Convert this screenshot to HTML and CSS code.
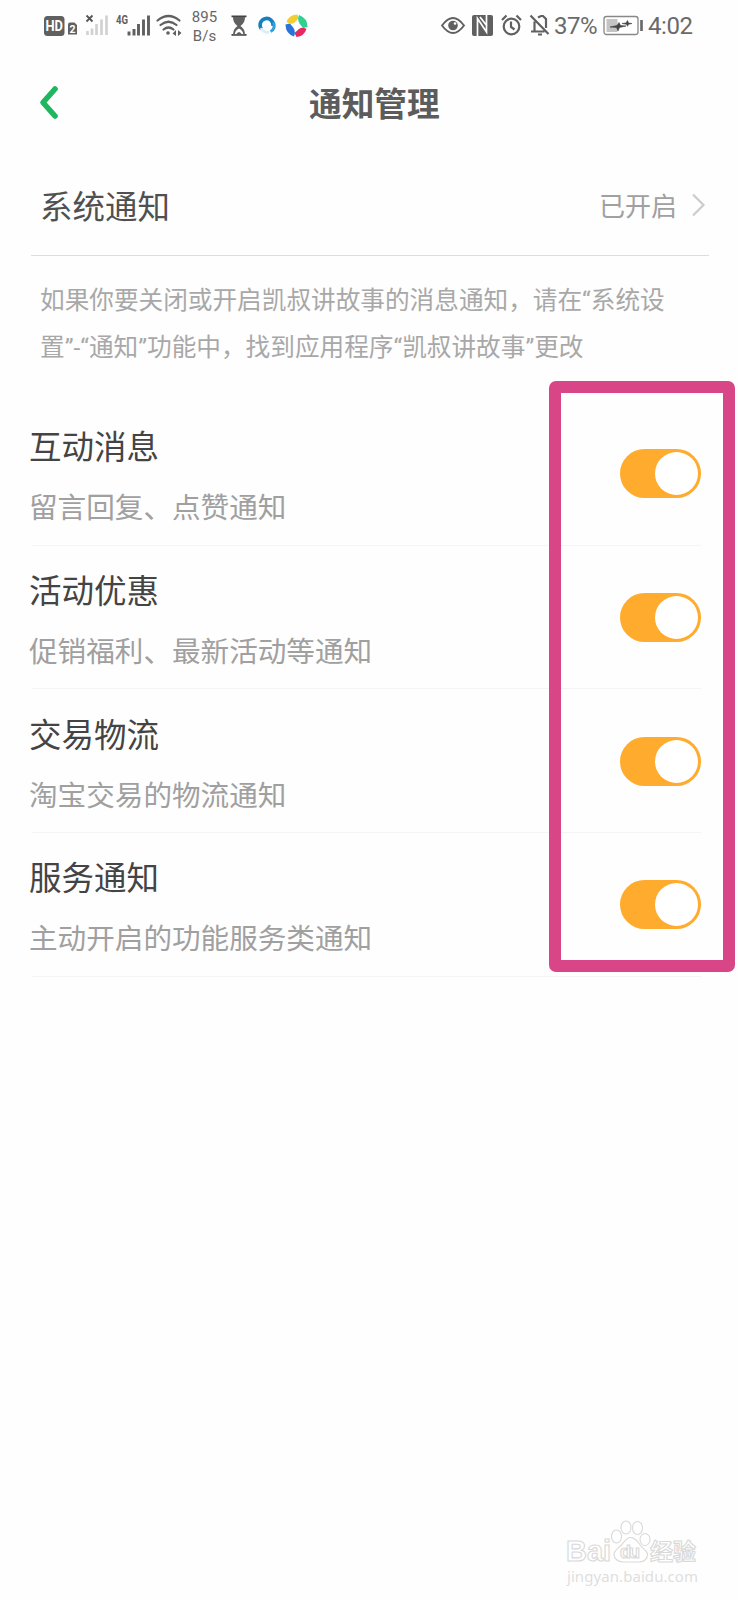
FILE: index.html
```html
<!DOCTYPE html>
<html lang="zh-CN">
<head>
<meta charset="utf-8">
<title>通知管理</title>
<link rel="stylesheet" href="styles.css">
</head>
<body>
<main class="screen">
  <div class="status">
    <svg class="status-left" width="160" height="50" viewBox="0 0 160 50">
      <rect x="14" y="16" width="20.500" height="20" rx="3.500" fill="#606060"/>
      <text x="15.500" y="31" class="hd" textLength="17.500" lengthAdjust="spacingAndGlyphs">HD</text>
      <path d="M38 24.500q0-2 2-2h4.500l2.500 2.500v9.500h-9z" fill="#606060"/>
      <text x="39.500" y="33" class="sim">2</text>
      <path d="M56.500 15.500l6 6m0-6l-6 6" stroke="#555" stroke-width="1.800"/>
      <path d="M57.500 35v-4M62 35v-6.500M66.500 35V24M71.500 35V19.500M76.500 35V15.500" stroke="#d0d0d0" stroke-width="2.600"/>
      <text x="86" y="24" class="gen" textLength="12" lengthAdjust="spacingAndGlyphs">4G</text>
      <path d="M99 35.500v-4M104 35.500v-6.500M108.500 35.500V24M113.500 35.500V19.500M118.500 35.500V15.500" stroke="#606060" stroke-width="2.900"/>
      <g fill="none" stroke="#606060" stroke-width="2.200" stroke-linecap="round">
        <path d="M127.500 20.500q11-9 22 0M130.500 25q8-6.500 16 0M133.500 29.500q5-4 10 0"/>
      </g>
      <circle cx="138" cy="33" r="1.800" fill="#606060"/>
      <path d="M142.500 33.500l3.500-3.500v6zM148 30v6l3.500-3z" fill="#606060"/>
    </svg>
    <div class="speed"><span>895</span><span>B/s</span></div>
    <svg class="status-apps" width="86" height="50" viewBox="0 0 86 50">
      <path d="M1.500 15.500h15v1.800h-15zM1.500 34h15v1.800h-15z" fill="#444"/>
      <path d="M3 17h12q0 6-4.500 9 4.500 3 4.500 9H3q0-6 4.500-9Q3 23 3 17z" fill="#606060"/>
      <path d="M4.800 34q.5-4 4.200-5.500 3.700 1.500 4.200 5.500z" fill="#fff"/>
      <path d="M6 34.500q3-5 6 0z" fill="#606060"/>
      <path d="M31.500 29a6.500 6.500 0 1 1 11.500-3" fill="none" stroke="#177fc0" stroke-width="3.600"/>
      <path d="M43.500 22q2.500 7-3 9.500" fill="none" stroke="#2fa0dc" stroke-width="3"/>
      <path d="M31 28q2 4.500 8 4.500" fill="none" stroke="#d6eefa" stroke-width="2.500"/>
      <path d="M56.500 22q2.500-7.500 11-7.500l1 4-4.500 4.500q-3 2-7.500-1z" fill="#f4cc2f"/>
      <path d="M69 15q8.500 3 8.500 12l-4.500 1-3.500-4.500q-2.500-4-.5-8.500z" fill="#2fd090"/>
      <path d="M76.500 29q-2.500 7.500-10 8l-2-4 4.500-4q3-2.500 7.500 0z" fill="#e32b60"/>
      <path d="M64 36.500q-8.500-3-8.500-12l4.500-1 3.500 4.500q2.500 4 .5 8.500z" fill="#2a72dc"/>
    </svg>
    <svg class="status-right" width="116" height="50" viewBox="0 0 116 50">
      <g fill="none" stroke="#606060" stroke-width="1.900">
        <path d="M2 25.500q11-15 22 0-11 15-22 0z"/>
        <circle cx="71.500" cy="26.500" r="7.800" stroke-width="2.200"/>
        <path d="M71 21.500v5.500l3.500 2.500M62 20l4.500-4.500M76.500 15.500l4.500 4.500" stroke-width="2.200"/>
        <path d="M91 31.500h13.500M94.500 31V21.500M98 17.500l3-1.500h2l3 3v9M98 34.500h4M90.500 15.500l18 18.500" stroke-width="2.200"/>
      </g>
      <circle cx="13" cy="25.500" r="4.800" fill="#606060"/>
      <circle cx="15" cy="23.500" r="1.300" fill="#fff"/>
      <path d="M34 15h17q2 0 2 2v17q0 2-2 2H34q-2 0-2-2V17q0-2 2-2z" fill="#606060"/>
      <path d="M37.500 36V18.500l9 13.500V15M40 17l7 9" fill="none" stroke="#fff" stroke-width="1.700"/>
    </svg>
    <span class="percent">37%</span>
    <svg class="battery" width="42" height="50" viewBox="0 0 42 50">
      <rect x="1" y="16.500" width="34" height="18" rx="2.500" fill="#fff" stroke="#888" stroke-width="1.300"/>
      <path d="M3.500 19h11v13h-11z" fill="#c4c4c4"/>
      <path d="M7 27l7-1.500 2-3 1.500 3 5.500.5-6.500 1.500-1.500 3.500-1.500-3.500zM19 23.500l4-.5 1.500-2.500 1 2.500 3.500.5-3.500.8-1 2-1-2z" fill="#444" stroke="#444" stroke-width=".6"/>
      <path d="M38.500 20v11" stroke="#666" stroke-width="2.600"/>
    </svg>
    <span class="clock">4:02</span>
  </div>

  <header class="header">
    <svg class="back" width="24" height="36" viewBox="0 0 24 36"><path d="M18 5L6 18.500 18 32" fill="none" stroke="#1fb65f" stroke-width="5.600" stroke-linecap="round" stroke-linejoin="round"/></svg>
    <h1 class="title">通知管理</h1>
  </header>

  <section class="system">
    <span class="system-label">系统通知</span>
    <span class="system-value">已开启</span>
    <svg class="chevron" width="16" height="26" viewBox="0 0 16 26"><path d="M2 2.500L12.500 13 2 23.500" fill="none" stroke="#ccc" stroke-width="2.200"/></svg>
  </section>
  <p class="hint">如果你要关闭或开启凯叔讲故事的消息通知，请在<q>“</q>系统设<br>置<q>”-“</q>通知<q>”</q>功能中，找到应用程序<q>“</q>凯叔讲故事<q>”</q>更改</p>

  <section class="list">
    <div class="item"><div class="copy"><div class="label">互动消息</div><div class="desc">留言回复、点赞通知</div></div><div class="toggle"><div class="knob"></div></div></div>
    <div class="item"><div class="copy"><div class="label">活动优惠</div><div class="desc">促销福利、最新活动等通知</div></div><div class="toggle"><div class="knob"></div></div></div>
    <div class="item"><div class="copy"><div class="label">交易物流</div><div class="desc">淘宝交易的物流通知</div></div><div class="toggle"><div class="knob"></div></div></div>
    <div class="item"><div class="copy"><div class="label">服务通知</div><div class="desc">主动开启的功能服务类通知</div></div><div class="toggle"><div class="knob"></div></div></div>
    <div class="frame"></div>
  </section>

  <svg class="watermark" width="140" height="72" viewBox="0 0 140 72">
    <g fill="#fff" stroke="#d9d9d9" stroke-width="1.100">
      <text x="2" y="41" class="wm-latin" textLength="45" lengthAdjust="spacingAndGlyphs">Bai</text>
      <ellipse cx="52.500" cy="16.500" rx="5" ry="6.500"/>
      <ellipse cx="62" cy="7.500" rx="5" ry="6.500"/>
      <ellipse cx="73.500" cy="8" rx="5" ry="6.500"/>
      <ellipse cx="81" cy="19.500" rx="5" ry="6"/>
      <path d="M66.500 17.500c5 0 7 4 10 8s7 5 7 9-3 7.500-8 7.500H59c-5 0-9-3.500-9-7.500s4-6 7-9 5-8 9.500-8z"/>
      <text x="56" y="38" class="wm-du" textLength="20">du</text>
      <text x="86" y="39.500" class="wm-cjk" textLength="46">经验</text>
      <text x="3" y="62" class="wm-url" textLength="131">jingyan.baidu.com</text>
    </g>
  </svg>
</main>
</body>
</html>
```

FILE: styles.css
```css
* { box-sizing: border-box; }
body {
  margin: 0;
  background: #fefefe;
  font-family: "Noto Sans CJK SC", sans-serif;
}
.screen {
  width: 738px;
  height: 1600px;
  display: flex;
  flex-direction: column;
  overflow: hidden;
}
.status {
  height: 52px;
  flex: none;
  display: flex;
  align-items: flex-start;
  padding-left: 30px;
  font-family: Roboto, sans-serif;
  color: #666;
}
.status svg { flex: none; }
.hd { font: 700 14px Roboto, sans-serif; fill: #fff; }
.sim { font: 700 10.5px Roboto, sans-serif; fill: #fff; }
.gen { font: 700 12.5px Roboto, sans-serif; fill: #606060; }
.speed {
  width: 40px;
  padding: 8px 0 0 1px;
  display: flex;
  flex-direction: column;
  align-items: center;
  font-size: 15px;
  line-height: 18.500px;
}
.status-left { margin-right: -6px; }
.status-apps { margin-left: 6px; }
.status-right { margin-left: 124px; }
.percent {
  width: 48px;
  margin-left: -2px;
  font-size: 24px;
  line-height: 52px;
  letter-spacing: -0.5px;
  white-space: nowrap;
}
.percent, .clock { font-weight: 400; color: #6a6a6a; }
.battery { margin-left: 1px; }
.clock { font-size: 24px; line-height: 52px; margin-left: 3px; letter-spacing: -.4px; }
.header {
  height: 102px;
  flex: none;
  display: flex;
  align-items: center;
  padding-left: 37px;
}
.back { margin-bottom: 3px; }
.title {
  margin: 0 0 3px 248px;
  font-size: 32.700px;
  line-height: 48px;
  font-weight: 700;
  color: #5c5c5c;
}
.system {
  height: 102px;
  flex: none;
  margin: 0 29px 0 31px;
  padding: 0 2px 0 9px;
  display: flex;
  align-items: center;
  border-bottom: 1px solid #ddd;
}
.system-label { flex: 1; font-size: 32.500px; color: #505050; }
.system-value { font-size: 26px; color: #a0a0a0; }
.chevron { margin-left: 14px; }
.hint {
  height: 94px;
  margin: 19px 0 33px 40px;
  font-size: 24.650px;
  line-height: 47px;
  color: #a8a8a8;
  white-space: nowrap;
}
.hint q { quotes: none; font-family: Roboto, sans-serif; line-height: 0; }
.list { position: relative; display: flex; flex-direction: column; }
.item {
  height: 143.700px;
  margin: 0 37px 0 29px;
  display: flex;
  justify-content: space-between;
  align-items: center;
  background: linear-gradient(#f5f5f5, #f5f5f5) 3px 100% / 100% 1px no-repeat;
}
.copy { display: flex; flex-direction: column; gap: 17px; }
.label { font-size: 32.500px; line-height: 48px; color: #444; }
.desc { font-size: 28.600px; line-height: 40px; color: #a0a0a0; }
.toggle {
  width: 81.500px;
  height: 49px;
  display: flex;
  justify-content: flex-end;
  align-items: center;
  padding-right: 3px;
  border-radius: 25px;
  background: #ffab2e;
}
.knob { width: 43px; height: 43px; border-radius: 50%; background: #fff; }
.frame {
  position: absolute;
  left: 549px;
  top: -21px;
  width: 186px;
  height: 591px;
  border: 12px solid #d84687;
  border-radius: 7px;
}
.watermark { margin: auto 34px 8px auto; flex: none; }
.wm-latin { font: 700 29px "Liberation Sans", sans-serif; }
.wm-du { font: 700 18px "Liberation Sans", sans-serif; }
.wm-cjk { font: 700 23px "Noto Sans CJK SC", sans-serif; }
.wm-url { font: 400 15px "Noto Sans", sans-serif; stroke: none; fill: #dedede; }
```
